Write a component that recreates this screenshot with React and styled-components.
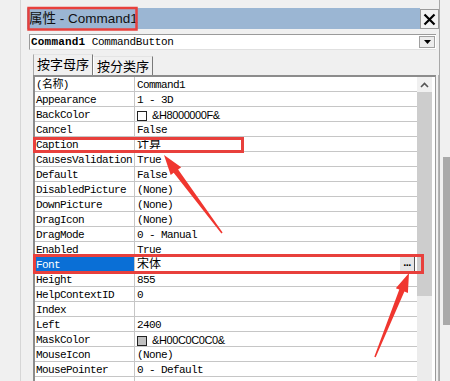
import React from 'react'
import styled, { createGlobalStyle } from 'styled-components'

const GlobalStyle = createGlobalStyle`
  html, body { margin: 0; padding: 0; background: #f0f0f0; }
  * { box-sizing: border-box; }
`

const rows = [
  { name: '(名称)', value: 'Command1' },
  { name: 'Appearance', value: '1 - 3D' },
  { name: 'BackColor', value: '&H8000000F&', swatch: '#ffffff' },
  { name: 'Cancel', value: 'False' },
  { name: 'Caption', value: '计算', cjk: true },
  { name: 'CausesValidation', value: 'True' },
  { name: 'Default', value: 'False' },
  { name: 'DisabledPicture', value: '(None)' },
  { name: 'DownPicture', value: '(None)' },
  { name: 'DragIcon', value: '(None)' },
  { name: 'DragMode', value: '0 - Manual' },
  { name: 'Enabled', value: 'True' },
  { name: 'Font', value: '宋体', cjk: true, selected: true },
  { name: 'Height', value: '855' },
  { name: 'HelpContextID', value: '0' },
  { name: 'Index', value: '' },
  { name: 'Left', value: '2400' },
  { name: 'MaskColor', value: '&H00C0C0C0&', swatch: '#c0c0c0' },
  { name: 'MouseIcon', value: '(None)' },
  { name: 'MousePointer', value: '0 - Default' },
  { name: '', value: '' },
]

// tapered red arrow: thin tail, wide neck, triangle head
function arrowPoints(tail, tip, wt, wn, hl, hw) {
  const dx = tip[0] - tail[0]
  const dy = tip[1] - tail[1]
  const len = Math.hypot(dx, dy)
  const ux = dx / len, uy = dy / len
  const nx = -uy, ny = ux
  const neck = [tip[0] - ux * hl, tip[1] - uy * hl]
  const p = (b, w) => `${(b[0] + nx * w / 2).toFixed(1)},${(b[1] + ny * w / 2).toFixed(1)}`
  return [
    p(tail, wt), p(neck, wn), p(neck, hw), `${tip[0]},${tip[1]}`,
    p(neck, -hw), p(neck, -wn), p(tail, -wt),
  ].join(' ')
}

function App() {
  return (
    <Page>
      <GlobalStyle />
      <Gutter />
      <Win>
        <TitleBar>
          <TitleText>属性 - Command1</TitleText>
          <CloseBtn>
            <svg width="13" height="13" viewBox="0 0 13 13">
              <path d="M1.5 1.5 L11.5 11.5 M11.5 1.5 L1.5 11.5" stroke="#000" strokeWidth="2.2" />
            </svg>
          </CloseBtn>
        </TitleBar>

        <Combo>
          <ComboText><b>Command1</b> CommandButton</ComboText>
          <DropBtn>
            <svg width="7" height="4" viewBox="0 0 7 4"><path d="M0 0 H7 L3.5 4 Z" fill="#000" /></svg>
          </DropBtn>
        </Combo>

        <Tabs>
          <Tab $active>按字母序</Tab>
          <Tab>按分类序</Tab>
        </Tabs>

        <Panel>
          <Grid>
            <Rows>
              {rows.map((r, i) => (
                <Row key={i}>
                  <NameCell $selected={r.selected}>{r.name}</NameCell>
                  <ValueCell>
                    {r.swatch && <Swatch $color={r.swatch} />}
                    {r.swatch ? <HexText>{r.value}</HexText> : r.cjk ? <Cjk>{r.value}</Cjk> : r.value}
                    {r.selected && <DotsBtn>...</DotsBtn>}
                  </ValueCell>
                </Row>
              ))}
            </Rows>
            <ScrollBar>
              <ScrollUp>
                <svg width="9" height="6" viewBox="0 0 9 6"><path d="M1 5 L4.5 1.5 L8 5" stroke="#555" strokeWidth="1.6" fill="none" /></svg>
              </ScrollUp>
              <Thumb />
            </ScrollBar>
          </Grid>
        </Panel>
      </Win>
      <RightStrip>
        <OuterThumb />
      </RightStrip>

      <Marks width="450" height="381" viewBox="0 0 450 381">
        <rect x="28.5" y="8" width="108" height="21.5" fill="none" stroke="#e8403c" strokeWidth="2.5" />
        <rect x="34.5" y="138.5" width="208" height="13" fill="none" stroke="#e8403c" strokeWidth="3" />
        <rect x="34.5" y="255.5" width="388" height="17" fill="none" stroke="#e8403c" strokeWidth="3" />
        <polygon points={arrowPoints([222, 233], [164, 155], 1.5, 5.5, 20, 13)} fill="#f0362f" />
        <polygon points={arrowPoints([375, 357], [409, 273], 1.5, 5.5, 19, 13)} fill="#f0362f" />
      </Marks>
    </Page>
  )
}

const Page = styled.div`
  position: relative;
  width: 450px;
  height: 381px;
  overflow: hidden;
  display: flex;
  background: #f0f0f0;
`

const Gutter = styled.div`
  width: 21px;
  border-right: 1px solid #d6d6d6;
`

const Win = styled.div`
  width: 419px;
  display: flex;
  flex-direction: column;
  border-right: 1px solid #a8a8a8;
  & > * { flex-shrink: 0; }
`

const TitleBar = styled.div`
  display: flex;
  height: 21px;
  margin: 8px 0 0 6px;
`

const TitleText = styled.div`
  flex: 1;
  background: #9bb6d3;
  padding-left: 2px;
  font-family: "Liberation Sans", "Noto Sans CJK SC", sans-serif;
  font-size: 13.5px;
  line-height: 21px;
  color: #111;
`

const CloseBtn = styled.div`
  width: 19px;
  height: 20px;
  margin-top: 1px;
  background: #f2f2f2;
  border: 1px solid #9a9a9a;
  display: flex;
  align-items: center;
  justify-content: center;
`

const Combo = styled.div`
  display: flex;
  align-items: center;
  height: 16px;
  margin: 5px 3px 0 8px;
  background: #fff;
  border-top: 1px solid #9a9a9a;
  border-left: 1px solid #9a9a9a;
  border-bottom: 1px solid #e0e0e0;
`

const ComboText = styled.div`
  flex: 1;
  padding-left: 1px;
  font-family: "Liberation Mono", monospace;
  font-size: 11px;
  letter-spacing: -0.3px;
  color: #000;
  b { letter-spacing: 0.2px; }
`

const DropBtn = styled.div`
  width: 16px;
  height: 12px;
  margin-right: 1px;
  background: #ececec;
  border: 1px solid #a0a0a0;
  display: flex;
  align-items: center;
  justify-content: center;
`

const Tabs = styled.div`
  display: flex;
  align-items: flex-end;
  height: 22px;
  margin: 3px 0 0 12px;
`

const Tab = styled.div`
  height: ${(p) => (p.$active ? '21px' : '19px')};
  padding: 0 3px;
  border-left: 1px solid ${(p) => (p.$active ? '#a8a8a8' : '#ffffff')};
  border-top: 1px solid #e4e4e4;
  border-right: 1px solid #7a7a7a;
  background: #f0f0f0;
  font-family: "Noto Sans CJK SC", sans-serif;
  font-size: 13px;
  line-height: 18px;
  color: #000;
`

const Panel = styled.div`
  flex: 1 1 0;
  min-height: 0;
  overflow: hidden;
  margin-left: 12px;
  border-right: 1px solid #b4b4b4;
`

const Grid = styled.div`
  display: flex;
  height: 100%;
  width: 403px;
  border-top: 2px solid #8c8c8c;
  border-left: 2px solid #8c8c8c;
  border-right: 1px solid #9a9a9a;
  background: #fff;
`

const Rows = styled.div`
  width: 382px;
`

const Row = styled.div`
  display: grid;
  grid-template-columns: 100px 1fr;
  height: 15px;
  border-bottom: 1px solid #c6c6c6;
  font-family: "Liberation Mono", "Noto Sans CJK SC", monospace;
  font-size: 11px;
  letter-spacing: -0.6px;
  line-height: 12px;
  color: #000;
`

const NameCell = styled.div`
  padding: 2px 0 0 1px;
  border-right: 1px solid #c6c6c6;
  white-space: nowrap;
  overflow: hidden;
  background: ${(p) => (p.$selected ? '#0a6fd6' : 'transparent')};
  color: ${(p) => (p.$selected ? '#fff' : '#000')};
`

const ValueCell = styled.div`
  display: flex;
  align-items: flex-end;
  padding: 2px 0 0 2px;
  white-space: nowrap;
`

const Cjk = styled.span`
  font-size: 12px;
  letter-spacing: 0;
  line-height: 12px;
`

const Swatch = styled.span`
  align-self: center;
  width: 10px;
  height: 10px;
  margin: 1px 5px 0 0;
  background: ${(p) => p.$color};
  border: 1px solid #222;
`

const HexText = styled.span`
  font-family: "Liberation Sans", sans-serif;
  font-size: 11px;
  letter-spacing: -0.4px;
`

const DotsBtn = styled.span`
  align-self: stretch;
  margin: -2px 2px 0 auto;
  width: 15px;
  background: #e6e6e6;
  border-right: 1px solid #555;
  font-family: "Liberation Sans", sans-serif;
  font-weight: bold;
  font-size: 11px;
  letter-spacing: -0.5px;
  line-height: 11px;
  text-align: center;
`

const ScrollBar = styled.div`
  width: 15px;
  margin-right: 3px;
  display: flex;
  flex-direction: column;
  background: #ececec;
`

const ScrollUp = styled.div`
  height: 15px;
  display: flex;
  align-items: center;
  justify-content: center;
  background: #f0f0f0;
`

const Thumb = styled.div`
  height: 204px;
  background: #cdcdcd;
`

const RightStrip = styled.div`
  flex: 1;
  padding: 157px 0 0 3px;
  background: #f0f0f0;
`

const OuterThumb = styled.div`
  height: 168px;
  background: #a9a9a9;
`

const Marks = styled.svg`
  position: absolute;
  left: 0;
  top: 0;
  pointer-events: none;
`

export default App
